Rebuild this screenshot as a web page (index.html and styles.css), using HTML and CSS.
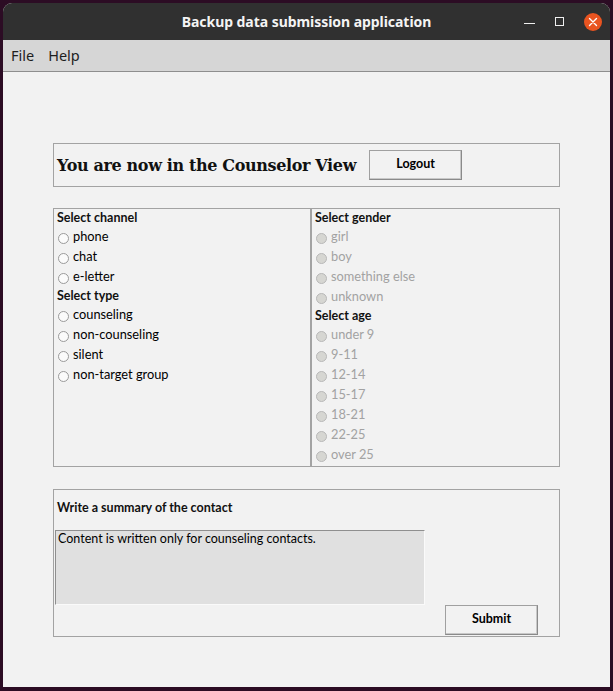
FILE: index.html
```html
<!DOCTYPE html>
<html>
<head>
<meta charset="utf-8">
<link rel="stylesheet" href="styles.css">
</head>
<body>
<div class="window">
  <div class="titlebar">
    <span class="title">Backup data submission application</span>
    <div class="controls">
      <span class="ctl min"></span>
      <span class="ctl max"></span>
      <span class="ctl close">
        <svg width="18" height="18" viewBox="0 0 18 18"><path d="M5.5 5.5 L12.5 12.5 M12.5 5.5 L5.5 12.5" stroke="#fff" stroke-width="1.4" stroke-linecap="round"/></svg>
      </span>
    </div>
  </div>
  <div class="menubar">
    <span class="menu">File</span>
    <span class="menu">Help</span>
  </div>
  <div class="content">
    <div class="panel header">
      <h1 class="view-title">You are now in the Counselor View</h1>
      <button class="btn logout">Logout</button>
    </div>

    <div class="selects">
      <div class="box">
        <div class="group-title">Select channel</div>
        <label class="radio"><input type="radio" name="ch"><span>phone</span></label>
        <label class="radio"><input type="radio" name="ch"><span>chat</span></label>
        <label class="radio"><input type="radio" name="ch"><span>e-letter</span></label>
        <div class="group-title">Select type</div>
        <label class="radio"><input type="radio" name="ty"><span>counseling</span></label>
        <label class="radio"><input type="radio" name="ty"><span>non-counseling</span></label>
        <label class="radio"><input type="radio" name="ty"><span>silent</span></label>
        <label class="radio"><input type="radio" name="ty"><span>non-target group</span></label>
      </div>
      <div class="box right">
        <div class="group-title">Select gender</div>
        <label class="radio off"><input type="radio" name="g" disabled><span>girl</span></label>
        <label class="radio off"><input type="radio" name="g" disabled><span>boy</span></label>
        <label class="radio off"><input type="radio" name="g" disabled><span>something else</span></label>
        <label class="radio off"><input type="radio" name="g" disabled><span>unknown</span></label>
        <div class="group-title">Select age</div>
        <label class="radio off"><input type="radio" name="a" disabled><span>under 9</span></label>
        <label class="radio off"><input type="radio" name="a" disabled><span>9-11</span></label>
        <label class="radio off"><input type="radio" name="a" disabled><span>12-14</span></label>
        <label class="radio off"><input type="radio" name="a" disabled><span>15-17</span></label>
        <label class="radio off"><input type="radio" name="a" disabled><span>18-21</span></label>
        <label class="radio off"><input type="radio" name="a" disabled><span>22-25</span></label>
        <label class="radio off"><input type="radio" name="a" disabled><span>over 25</span></label>
      </div>
    </div>

    <div class="panel summary">
      <div class="group-title">Write a summary of the contact</div>
      <div class="textarea">Content is written only for counseling contacts.</div>
      <div class="actions">
        <button class="btn submit">Submit</button>
      </div>
    </div>
  </div>
</div>
</body>
</html>
```

FILE: styles.css
```css
* { box-sizing: border-box; }
html, body { margin: 0; padding: 0; }
body {
  background: #2c0c24;
  width: 613px;
  height: 691px;
  overflow: hidden;
  padding-top: 3px;
}
.window {
  margin-left: 3px;
  width: 607px;
  height: 684px;
  background: #f2f2f2;
  border-radius: 9px 9px 0 0;
  overflow: hidden;
  display: flex;
  flex-direction: column;
}
.titlebar {
  height: 37px;
  background: #303030;
  position: relative;
  display: flex;
  align-items: center;
  justify-content: center;
}
.title {
  color: #f4f4f4;
  font-family: "Noto Sans", "DejaVu Sans", sans-serif;
  font-weight: bold;
  font-size: 14px;
  letter-spacing: -0.05px;
  padding-bottom: 1px;
}
.controls {
  position: absolute;
  right: 8px;
  top: 0;
  height: 37px;
  display: flex;
  align-items: center;
}
.ctl { display: block; }
.min {
  width: 11px;
  height: 1.5px;
  background: #efefef;
  margin-top: 4px;
  margin-right: 20px;
}
.max {
  width: 9px;
  height: 9px;
  border: 1.3px solid #efefef;
  margin-right: 20px;
}
.close {
  width: 18px;
  height: 18px;
  border-radius: 50%;
  background: #e95420;
}
.close svg { display: block; }
.menubar {
  height: 32px;
  background: #d6d6d6;
  border-bottom: 1px solid #8e8e8e;
  display: flex;
  align-items: center;
  padding-left: 8px;
  gap: 14px;
}
.menu {
  font-family: "Noto Sans", "DejaVu Sans", sans-serif;
  font-size: 14.5px;
  color: #1e1e1e;
  padding-bottom: 2px;
}
.content {
  flex: 1;
  padding: 71px 0 0 50px;
  display: flex;
  flex-direction: column;
}
.panel {
  width: 507px;
  border: 1px solid #a3a3a3;
}
.header {
  height: 44px;
  display: flex;
  align-items: center;
  padding-left: 3px;
  gap: 13px;
}
.view-title {
  margin: 0;
  font-family: "DejaVu Serif", "Liberation Serif", serif;
  font-weight: bold;
  font-size: 16px;
  letter-spacing: -0.36px;
  color: #111;
  white-space: nowrap;
}
.btn {
  width: 93px;
  height: 30px;
  background: #f2f2f2;
  border: 1px solid #a0a0a0;
  border-right-color: #8a8a8a;
  border-bottom-color: #8a8a8a;
  box-shadow: inset -1px -1px 0 #c8c8c8;
  font-family: "Lato", "Open Sans", sans-serif;
  font-weight: bold;
  font-size: 12.5px;
  color: #000;
  padding: 0 0 3px 0;
}
.selects {
  margin-top: 21px;
  width: 507px;
  height: 259px;
  display: grid;
  grid-template-columns: 258px 249px;
}
.box {
  border: 1px solid #a3a3a3;
  padding-left: 3px;
  display: flex;
  flex-direction: column;
}
.group-title {
  font-family: "Lato", "Open Sans", sans-serif;
  font-weight: bold;
  font-size: 12.5px;
  line-height: 18px;
  color: #111;
}
.radio {
  display: flex;
  align-items: center;
  height: 20px;
  font-family: "Lato", "Open Sans", sans-serif;
  font-size: 12.8px;
  color: #000;
}
.radio span { padding-bottom: 2px; }
.radio input {
  appearance: none;
  -webkit-appearance: none;
  margin: 2px 4px 0 1px;
  width: 11px;
  height: 11px;
  border-radius: 50%;
  border: 1px solid #9a9a9a;
  background: #fbfbfb;
  flex: none;
}
.radio.off { color: #a2a2a2; }
.radio.off input {
  border-color: #b8b8b8;
  background: #d6d6d2;
}
.summary {
  margin-top: 22px;
  height: 148px;
  display: flex;
  flex-direction: column;
  padding-top: 9px;
}
.summary .group-title { padding-left: 3px; }
.textarea {
  margin-top: 13px;
  margin-left: 1px;
  width: 370px;
  height: 75px;
  background: #e0e0e0;
  border: 1px solid #fafafa;
  border-top-color: #8f8f8f;
  border-left-color: #8f8f8f;
  font-family: "Lato", "Open Sans", sans-serif;
  font-size: 12.5px;
  line-height: 14px;
  color: #000;
  padding: 1px 0 0 2px;
}
.actions {
  display: flex;
  justify-content: flex-end;
  padding-right: 21px;
}
```
